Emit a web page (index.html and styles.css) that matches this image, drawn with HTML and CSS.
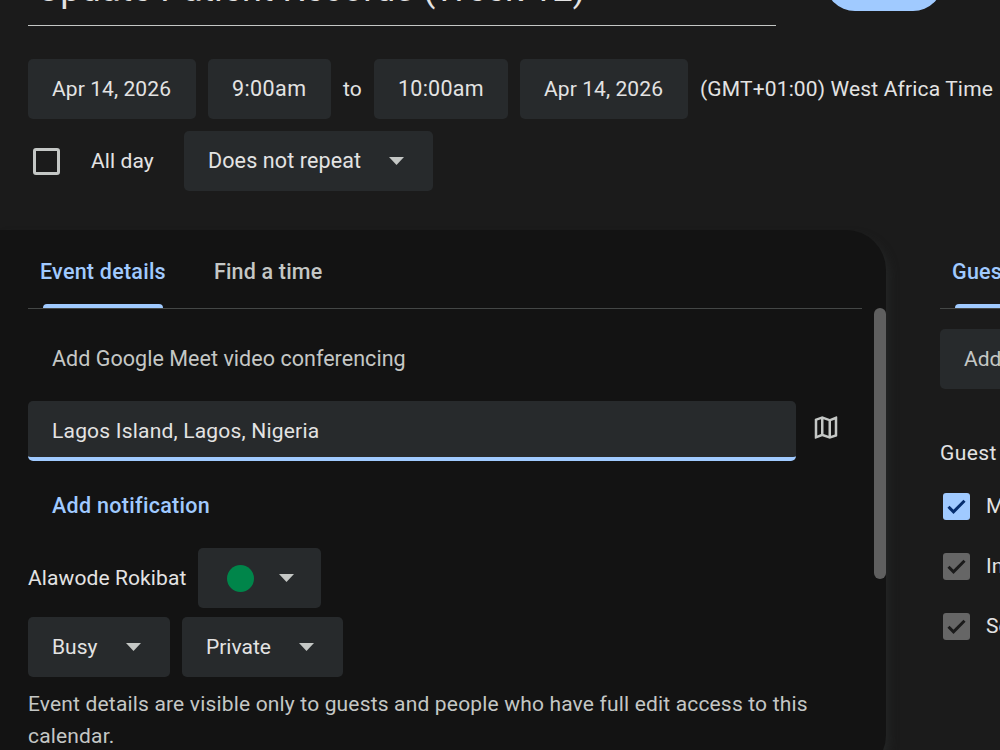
FILE: index.html
```
<!DOCTYPE html>
<html lang="en">
<head>
    <meta charset="UTF-8">
    <title>Event details</title>
    <link rel="stylesheet" href="styles.css">
</head>
<body>
    <header class="event-header">
        <div class="title-row">
            <div class="event-title">Update Patient Records (Week 12)</div>
            <button class="save" aria-label="Save"></button>
        </div>

        <div class="when">
            <button class="chip date">Apr 14, 2026</button>
            <button class="chip start">9:00am</button>
            <span class="to">to</span>
            <button class="chip end">10:00am</button>
            <button class="chip date">Apr 14, 2026</button>
            <span class="timezone">(GMT+01:00) West Africa Time</span>
        </div>

        <div class="repeat">
            <span class="checkbox empty"></span>
            <span class="all-day">All day</span>
            <button class="chip repeat-select">Does not repeat <i class="arrow"></i></button>
        </div>
    </header>

    <main class="columns">
        <section class="details">
            <nav class="tabs">
                <a class="tab active">Event details</a>
                <a class="tab">Find a time</a>
            </nav>
            <div class="scrollbar"></div>

            <div class="meet">Add Google Meet video conferencing</div>

            <div class="location-row">
                <div class="location">Lagos Island, Lagos, Nigeria</div>
                <svg class="map" viewBox="0 0 24 24" width="30" height="31">
                    <path d="M20.5 3l-.16.03L15 5.1 9 3 3.36 4.9c-.21.07-.36.25-.36.48V20.5c0 .28.22.5.5.5l.16-.03L9 18.9l6 2.1 5.64-1.9c.21-.07.36-.25.36-.48V3.5c0-.28-.22-.5-.5-.5zM10 5.47l4 1.4v11.66l-4-1.4V5.47zm-5 .99l3-1.01v11.7l-3 1.16V6.46zm14 11.08l-3 1.01V6.86l3-1.16v11.84z"/>
                </svg>
            </div>

            <div class="notification">Add notification</div>

            <div class="owner">
                <span class="owner-name">Alawode Rokibat</span>
                <button class="chip color"><i class="dot"></i><i class="arrow"></i></button>
            </div>

            <div class="access">
                <button class="chip busy">Busy <i class="arrow"></i></button>
                <button class="chip private">Private <i class="arrow"></i></button>
            </div>

            <p class="note">Event details are visible only to guests and people who have full edit access to this<br>calendar.</p>
        </section>

        <aside class="guests">
            <nav class="tabs">
                <a class="tab active">Guests</a>
            </nav>
            <div class="add-guests">Add guests</div>
            <h2>Guest permissions</h2>
            <div class="permission">
                <span class="checkbox checked"><svg viewBox="0 0 27 27"><path d="M5.5 13.8l5 5L21.5 7.8"/></svg></span>Modify event
            </div>
            <div class="permission">
                <span class="checkbox disabled"><svg viewBox="0 0 27 27"><path d="M5.5 13.8l5 5L21.5 7.8"/></svg></span>Invite others
            </div>
            <div class="permission">
                <span class="checkbox disabled"><svg viewBox="0 0 27 27"><path d="M5.5 13.8l5 5L21.5 7.8"/></svg></span>See guest list
            </div>
        </aside>
    </main>
</body>
</html>
```
FILE: styles.css
```
* {
    box-sizing: border-box;
}

html {
    overflow: hidden;
}

body {
    margin: 0;
    height: 750px;
    overflow: hidden;
    background: #1b1b1b;
    color: #e3e3e3;
    font: 21px/32px Roboto, sans-serif;
    white-space: nowrap;
}

button {
    border: 0;
    padding: 0;
    font: inherit;
    color: inherit;
}

.event-header {
    height: 230px;
    padding-left: 28px;
}

.title-row {
    display: flex;
    height: 26px;
    align-items: flex-end;
}

.event-title {
    width: 748px;
    height: 66px;
    padding-left: 9px;
    border-bottom: 1px solid #c4c7c5;
    font-size: 36px;
    line-height: 58px;
}

.save {
    width: 118px;
    height: 60px;
    margin: 0 0 15px 49px;
    border-radius: 30px;
    background: #a0caff;
}

.when {
    display: flex;
    align-items: center;
    margin-top: 33px;
}

.chip {
    height: 60px;
    border-radius: 5px;
    background: #272a2c;
    display: flex;
    align-items: center;
    padding-left: 24px;
}

.date {
    width: 168px;
    letter-spacing: .09px;
}

.start {
    width: 123px;
    margin-left: 12px;
    font-size: 21.5px;
    letter-spacing: .4px;
}

.to {
    width: 43px;
    padding-left: 12px;
}

.end {
    width: 134px;
    margin-right: 12px;
    font-size: 21.5px;
    letter-spacing: .25px;
}

.timezone {
    margin-left: 12px;
    letter-spacing: .15px;
}

.repeat {
    display: flex;
    align-items: center;
    margin-top: 12px;
}

.checkbox {
    width: 27px;
    height: 27px;
    border-radius: 3px;
}

.empty {
    margin-left: 5px;
    border: 3px solid #c4c7c5;
}

.all-day {
    width: 93px;
    margin-left: 31px;
    letter-spacing: .1px;
}

.arrow {
    width: 15px;
    height: 8px;
    background: #c4c7c5;
    clip-path: polygon(0 0, 100% 0, 50% 100%);
}

.repeat-select {
    width: 249px;
    justify-content: space-between;
    padding-right: 29px;
    font-size: 21.5px;
    letter-spacing: .12px;
}

.columns {
    display: flex;
}

.details {
    position: relative;
    flex: none;
    width: 886px;
    height: 545px;
    padding: 0 24px 0 28px;
    border-radius: 0 40px 40px 0;
    background: #131313;
    box-shadow: 5px 5px 10px -2px #242626;
}

.tabs {
    display: flex;
    height: 79px;
    border-bottom: 1px solid #444746;
    font-size: 21.5px;
    font-weight: 500;
}

.tab {
    position: relative;
    height: 78px;
    padding: 26px 12px 0;
    margin-right: 24px;
    color: #c4c7c5;
    letter-spacing: .18px;
}

.tab.active {
    color: #a0caff;
    letter-spacing: .24px;
}

.tab.active::after {
    content: "";
    position: absolute;
    left: 15px;
    right: 15px;
    bottom: 0;
    height: 4px;
    border-radius: 4px 4px 0 0;
    background: #a0caff;
}

.scrollbar {
    position: absolute;
    top: 78px;
    right: 0;
    width: 12px;
    height: 271px;
    border-radius: 6px;
    background: #5f5f5f;
}

.meet {
    margin: 34px 0 26px;
    padding-left: 24px;
    color: #c4c7c5;
    font-size: 21.5px;
    letter-spacing: .04px;
}

.location-row {
    display: flex;
}

.location {
    width: 768px;
    height: 60px;
    padding: 14px 24px;
    border-radius: 5px;
    border-bottom: 4px solid #a0caff;
    background: #272a2c;
    letter-spacing: .2px;
}

.map {
    margin: 11px 0 0 15px;
    fill: #c4c7c5;
}

.notification {
    margin: 29px 0 26px;
    padding-left: 24px;
    color: #a0caff;
    font-size: 21.5px;
    font-weight: 500;
    letter-spacing: .3px;
}

.owner {
    display: flex;
    align-items: center;
}

.owner-name {
    width: 170px;
    letter-spacing: .1px;
}

.color {
    width: 123px;
    padding-left: 29px;
}

.dot {
    width: 27px;
    height: 27px;
    margin-right: 25px;
    border-radius: 50%;
    background: #00854a;
}

.access {
    display: flex;
    gap: 12px;
    margin-top: 9px;
}

.busy, .private {
    width: 142px;
    justify-content: space-between;
    padding-right: 29px;
}

.private {
    width: 161px;
}

.note {
    margin: 11px 0 0;
    color: #c4c7c5;
    letter-spacing: .17px;
}

.guests {
    width: 300px;
    margin-left: 54px;
}

.add-guests {
    height: 60px;
    margin-top: 20px;
    padding: 14px 24px;
    border-radius: 5px;
    background: #272a2c;
    color: #c4c7c5;
}

h2 {
    margin: 48px 0 7px;
    font: inherit;
    letter-spacing: .4px;
}

.permission {
    display: flex;
    align-items: center;
    height: 60px;
    margin-left: 3px;
}

.permission .checkbox {
    margin-right: 16px;
}

.checked {
    background: #a0caff;
}

.disabled {
    background: #666;
}

.checkbox svg {
    display: block;
    fill: none;
    stroke: #1b1b1b;
    stroke-width: 3;
}

.checked svg {
    stroke: #062e6f;
}
```
